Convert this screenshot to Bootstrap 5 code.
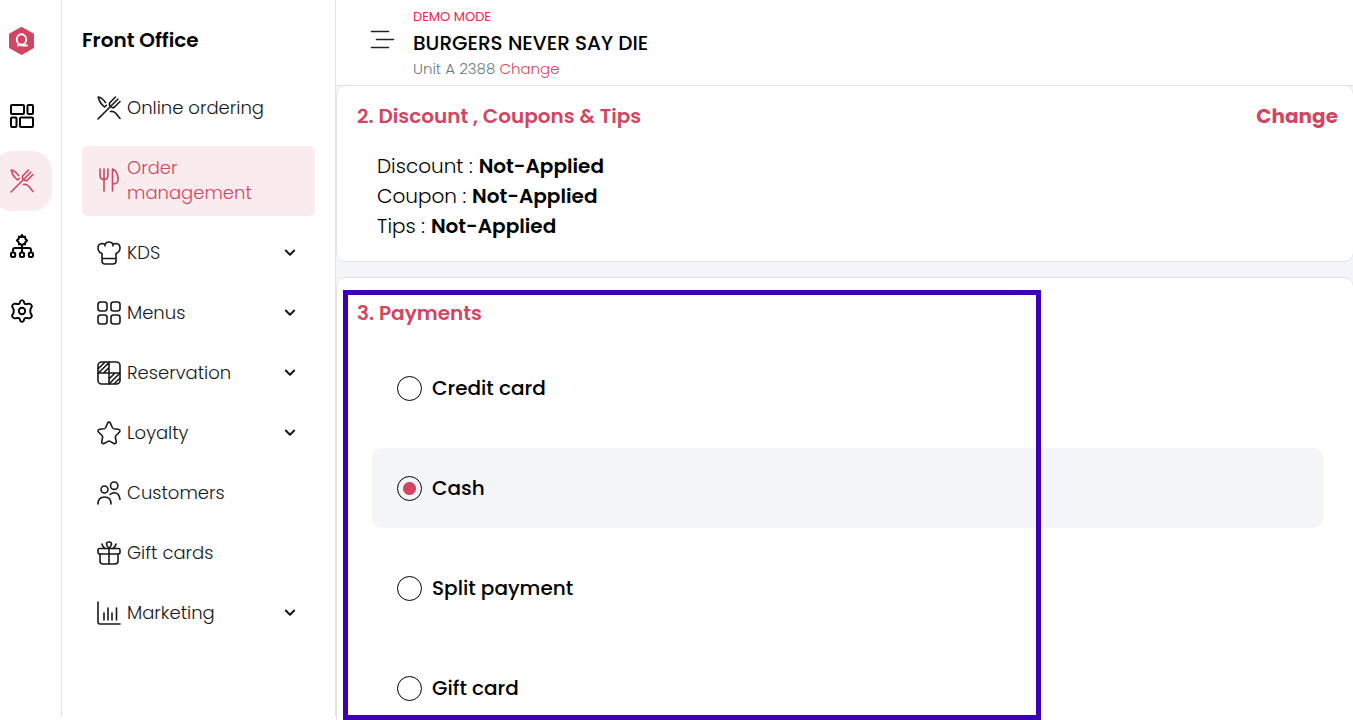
<!DOCTYPE html>
<html lang="en">
<head>
<meta charset="utf-8">
<meta name="viewport" content="width=device-width, initial-scale=1">
<title>Front Office - Order management</title>
<link href="https://cdn.jsdelivr.net/npm/bootstrap@5.3.0/dist/css/bootstrap.min.css" rel="stylesheet">
<style>
  :root { --brand: #d14662; --brand-soft: #faebee; --line: #e2e3e5; --surface: #f4f5f9; }
  body { font-family: Poppins, Inter, "Open Sans", sans-serif; font-size: 20px; line-height: 30px; color: #000; background: #fff; }
  a { text-decoration: none; }
  svg { display: block; flex: none; fill: none; stroke: currentColor; stroke-width: 1.6; stroke-linecap: round; stroke-linejoin: round; }
  .brand-text { color: var(--brand); }
  .side-panel { height: calc(100vh - 4px); border-right: 1px solid var(--line); flex: none; }
  .rail { width: 62px; overflow: hidden; }
  .rail-top { height: 81px; padding-left: 8px; margin-bottom: 5px; }
  .rail-links { gap: 5px; }
  .rail-link { width: 60px; height: 60px; margin-left: -8px; border-radius: 20px; color: #000; }
  .rail-link.active { background: var(--brand-soft); color: var(--brand); }
  .menu-panel { width: 274px; padding: 25px 20px; }
  .menu-title { font-size: 20px; line-height: 30px; font-weight: 600; margin-bottom: 31px; }
  .menu-links { gap: 15px; }
  .menu-link { padding: 9px 15px 11px; gap: 6px; border-radius: 6px; font-size: 18px; line-height: 25px; font-weight: 300; color: #16181b; }
  .menu-link.active { background: var(--brand-soft); color: var(--brand); }
  .caret-slot { width: 20px; }
  .top-bar { height: 86px; padding-left: 34px; gap: 18px; border-bottom: 1px solid var(--line); background: #fff; flex: none; z-index: 1; }
  .venue-info { padding-top: 7px; }
  .demo-note { font-size: 13px; line-height: 20px; font-weight: 400; color: #f01e50; }
  .venue { font-size: 20px; line-height: 32px; font-weight: 500; }
  .unit { font-size: 15px; line-height: 20px; font-weight: 300; color: #6b7a80; }
  .order-area { background: var(--surface); overflow: hidden; }
  .step { border: 1px solid var(--line); border-radius: 10px; background: #fff; padding: 20px 15px 20px 20px; margin: 0 -1px 15px 0; }
  .step-first { margin-top: -1px; padding-top: 15px; }
  .step-title { font-size: 20px; line-height: 30px; font-weight: 600; color: var(--brand); margin-bottom: 20px; }
  .summary { padding-left: 20px; font-weight: 300; }
  .summary-line { gap: 6px; }
  .summary dt { font-weight: 300; }
  .summary dd { font-weight: 600; margin: 0; }
  .pay-list { gap: 20px; }
  .pay-row { margin: 0 15px; padding: 0 25px; height: 80px; gap: 10px; border-radius: 10px; font-weight: 500; cursor: pointer; }
  .pay-row:has(:checked) { background: var(--surface); }
  .pay-row .form-check-input { width: 25px; height: 25px; margin: 0; border: 1px solid #000; background-color: transparent; }
  .pay-row .form-check-input:checked { background-image: radial-gradient(circle, var(--brand) 6px, transparent 7px); }
  .highlight { top: 12px; left: 6px; width: calc(69% - 3px); height: 430px; border: 5px solid #3d00b8; pointer-events: none; }
</style>
</head>
<body class="overflow-hidden">
<div class="d-flex vh-100">
  <nav class="side-panel rail" aria-label="Sections">
    <a href="#" class="rail-top d-flex align-items-center" aria-label="Home">
      <svg width="27" height="30" viewBox="0 0 27 30"><path d="M13.500 2 25 8.300V21.500L13.500 28 2 21.500V8.300z" fill="#d14662" stroke="#d14662" stroke-width="2"/><g stroke="#fff" stroke-width="1.900"><ellipse cx="13.500" cy="13.500" rx="4.700" ry="5.200"/><path d="M10 19.500q2.500-1.500 4.500 0H19"/></g></svg>
    </a>
    <div class="rail-links d-grid">
      <a href="#" class="rail-link d-flex align-items-center justify-content-center" aria-label="Dashboard"><svg width="24" height="24" viewBox="0 0 24 24"><g stroke-width="2"><rect x="1" y="1" width="13" height="9" rx="1"/><rect x="17.500" y="1" width="5.500" height="9" rx="1"/><rect x="1" y="13.500" width="5.500" height="9.500" rx="1"/><rect x="10" y="13.500" width="13" height="9.500" rx="1"/></g></svg></a>
      <a href="#" class="rail-link active d-flex align-items-center justify-content-center" aria-label="Front office"><svg width="24" height="24" viewBox="0 0 24 24"><use href="#cutlery"/></svg></a>
      <a href="#" class="rail-link d-flex align-items-center justify-content-center" aria-label="Organisation"><svg width="24" height="24" viewBox="0 0 24 24"><g stroke-width="2"><path d="M12 3 13.500 3 15 2.600 15.200 4.500 17 6.500 15.200 8.500 15 10.400 13.500 10 12 11.500 10.500 10 9 10.400 8.800 8.500 7 6.500 8.800 4.500 9 2.600 10.500 3 12 1 13.500 3M12 11.500V18M3 17v-1q0-2 2-2h14q2 0 2 2v1"/><rect x="1" y="18.500" width="4.200" height="4.500" rx="1.500"/><rect x="9.900" y="18.500" width="4.200" height="4.500" rx="1.500"/><rect x="18.800" y="18.500" width="4.200" height="4.500" rx="1.500"/></g></svg></a>
      <a href="#" class="rail-link d-flex align-items-center justify-content-center" aria-label="Settings"><svg width="24" height="24" viewBox="0 0 24 24"><g stroke-width="1.900"><circle cx="12" cy="12" r="3.200"/><path d="M10.300 2.300Q12 0 13.700 2.300L14.500 4.500Q15.500 5.400 17 5L19.300 4.600Q21.600 4.900 21.900 7.500L20.500 10Q20 12 20.500 14L21.900 16.500Q21.600 19.100 19.300 19.400L17 19Q15.500 18.600 14.500 19.500L13.700 21.700Q12 24 10.300 21.700L9.500 19.500Q8.500 18.600 7 19L4.700 19.400Q2.400 19.100 2.100 16.500L3.500 14Q4 12 3.500 10L2.100 7.500Q2.400 4.900 4.700 4.600L7 5Q8.500 5.400 9.500 4.500Z"/></g></svg></a>
    </div>
  </nav>

  <!-- shared symbols -->
  <svg class="d-none" aria-hidden="true">
    <symbol id="cutlery" viewBox="0 0 24 24"><path d="M1 23 13.500 10.500M18.500 1 13 6.500Q11.500 8.500 13.500 10.500T17.500 11L23 5.500M20.800 3.200 14.500 9.500M9.300 9.300 7.500 11Q2.500 7 1.200 1Q5 1.500 8.500 6.500M13.500 15.500Q16.500 15 18.500 17L23 22.500"/></symbol>
    <symbol id="caret" viewBox="0 0 12 12"><path stroke-width="2" d="M1.800 3.500 6 7.700l4.200-4.200"/></symbol>
  </svg>

  <aside class="side-panel menu-panel">
    <h1 class="menu-title">Front Office</h1>
    <nav class="menu-links d-grid" aria-label="Front Office">
      <a href="#" class="menu-link d-flex align-items-center"><svg width="24" height="24"><use href="#cutlery"/></svg><span class="flex-grow-1">Online ordering</span></a>
      <a href="#" class="menu-link active d-flex align-items-center" aria-current="page"><svg width="24" height="24" viewBox="0 0 24 24"><path d="M3 1v6q0 4.500 4 4.500T11 7V1M7 1v22M15.500 23V1Q21 3 21 12q0 4-5.500 4"/></svg><span class="flex-grow-1">Order management</span><span class="caret-slot"></span></a>
      <a href="#" class="menu-link d-flex align-items-center"><svg width="24" height="24" viewBox="0 0 24 24"><path d="M5 12.500Q1 11 1 7 1 2.800 5 2.500q2 0 3 1Q9 1 12 1t4 2.500q1-1 3-1 4 .3 4 4.500 0 4-4 5.500v7.500q0 3-3 3H8q-3 0-3-3zM5 17.500h14M8 3.500V5M16 3.500V5"/></svg><span class="flex-grow-1">KDS</span><svg width="12" height="12" class="me-1"><use href="#caret"/></svg></a>
      <a href="#" class="menu-link d-flex align-items-center"><svg width="24" height="24" viewBox="0 0 24 24"><rect x="1" y="1" width="9" height="9" rx="2.500"/><rect x="14" y="1" width="9" height="9" rx="2.500"/><rect x="1" y="14" width="9" height="9" rx="2.500"/><rect x="14" y="14" width="9" height="9" rx="2.500"/></svg><span class="flex-grow-1">Menus</span><svg width="12" height="12" class="me-1"><use href="#caret"/></svg></a>
      <a href="#" class="menu-link d-flex align-items-center"><svg width="24" height="24" viewBox="0 0 24 24"><rect x="1" y="1" width="22" height="22" rx="3.500"/><path d="M12 1v22M1 12h22M1.500 7.500 7.500 1.500M2 11.500 11.500 2M7 11.500 12 6.500M12.500 17.500l5-5M13 22 22 13M17.500 22.500l5-5"/></svg><span class="flex-grow-1">Reservation</span><svg width="12" height="12" class="me-1"><use href="#caret"/></svg></a>
      <a href="#" class="menu-link d-flex align-items-center"><svg width="24" height="24" viewBox="0 0 24 24"><path d="M10.500 2.200Q12 0 13.500 2.200l1.800 4.300q.5 1 1.700 1.200l4.300.5q2.700.7 1 3L19 14.500q-.8.800-.6 1.900l.9 4.500q-.1 2.300-2.400 1.600L13 20.400q-1-.5-2 0l-3.900 2.100q-2.300.7-2.400-1.600l.9-4.500q.2-1.100-.6-1.900l-3.300-3.300q-1.700-2.300 1-3L7 7.700q1.200-.2 1.700-1.200z"/></svg><span class="flex-grow-1">Loyalty</span><svg width="12" height="12" class="me-1"><use href="#caret"/></svg></a>
      <a href="#" class="menu-link d-flex align-items-center"><svg width="24" height="24" viewBox="0 0 24 24"><circle cx="7.500" cy="8.500" r="3.500"/><circle cx="17.200" cy="4.700" r="3.700"/><path d="M1 23q0-7 6.500-7t6.500 7M13 13.500q2-1.700 4.500-1.700 4.500 0 5.500 6.500"/></svg><span class="flex-grow-1">Customers</span></a>
      <a href="#" class="menu-link d-flex align-items-center"><svg width="24" height="24" viewBox="0 0 24 24"><rect x="1" y="7.500" width="22" height="5.500" rx="1.500"/><path d="M3 13v7q0 3 3 3h12q3 0 3-3v-7M12 7.500V23M12 7.500Q9.500 5 9.500 3T12 1t2.500 2T12 7.500M5 3q.5 3 3 4.500M19 3q-.5 3-3 4.500"/></svg><span class="flex-grow-1">Gift cards</span></a>
      <a href="#" class="menu-link d-flex align-items-center"><svg width="24" height="24" viewBox="0 0 24 24"><path d="M1 1v20q0 2 2 2h20M7 19v-7M11 19V7M15 19v-7M19.500 19V7"/></svg><span class="flex-grow-1">Marketing</span><svg width="12" height="12" class="me-1"><use href="#caret"/></svg></a>
    </nav>
  </aside>

  <div class="d-flex flex-column flex-grow-1 overflow-hidden">
    <header class="top-bar d-flex position-relative">
      <button type="button" class="btn p-0 border-0 align-self-start mt-4 pt-1" aria-label="Toggle menu"><svg width="25" height="24" viewBox="0 0 25 24"><path d="M1.500 3.500h17M6.500 11.500h17M1.500 19.500h17"/></svg></button>
      <div class="venue-info">
        <div class="demo-note">DEMO MODE</div>
        <div class="venue">BURGERS NEVER SAY DIE</div>
        <div class="unit">Unit A 2388 <a href="#" class="brand-text">Change</a></div>
      </div>
    </header>

    <main class="order-area flex-grow-1">
      <section class="step step-first">
        <div class="d-flex justify-content-between">
          <h2 class="step-title">2. Discount , Coupons &amp; Tips</h2>
          <a href="#" class="brand-text fw-bold">Change</a>
        </div>
        <dl class="summary mb-0">
          <div class="summary-line d-flex"><dt>Discount :</dt><dd>Not-Applied</dd></div>
          <div class="summary-line d-flex"><dt>Coupon :</dt><dd>Not-Applied</dd></div>
          <div class="summary-line d-flex"><dt>Tips :</dt><dd>Not-Applied</dd></div>
        </dl>
      </section>

      <section class="step position-relative">
        <h2 class="step-title">3. Payments</h2>
        <div class="pay-list d-grid" role="radiogroup" aria-label="Payments">
          <label class="pay-row d-flex align-items-center" for="pay-credit"><input class="form-check-input" type="radio" name="payment" id="pay-credit">Credit card</label>
          <label class="pay-row d-flex align-items-center" for="pay-cash"><input class="form-check-input" type="radio" name="payment" id="pay-cash" checked>Cash</label>
          <label class="pay-row d-flex align-items-center" for="pay-split"><input class="form-check-input" type="radio" name="payment" id="pay-split">Split payment</label>
          <label class="pay-row d-flex align-items-center" for="pay-gift"><input class="form-check-input" type="radio" name="payment" id="pay-gift">Gift card</label>
        </div>
        <div class="highlight position-absolute"></div>
      </section>
    </main>
  </div>
</div>
<script src="https://cdn.jsdelivr.net/npm/bootstrap@5.3.0/dist/js/bootstrap.bundle.min.js"></script>
</body>
</html>
